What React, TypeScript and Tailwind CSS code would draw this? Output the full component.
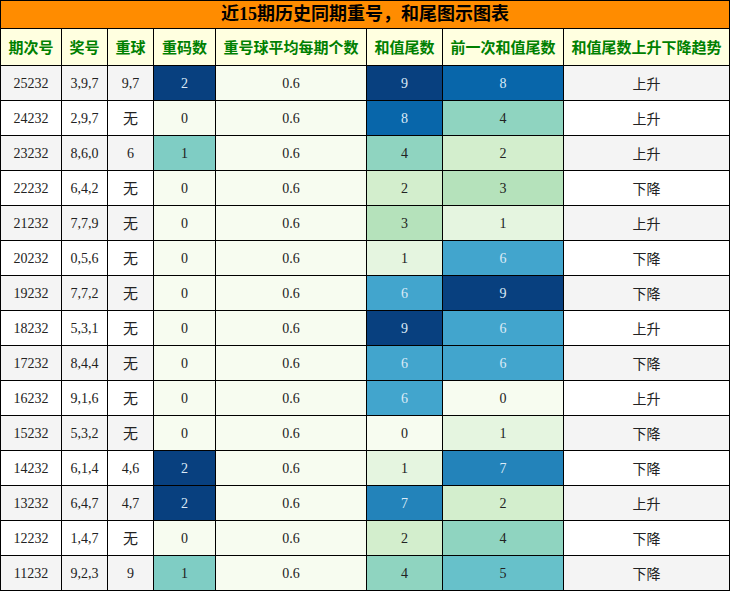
const rows: [string, string, string, number, number, number, string][] = [
  ["25232", "3,9,7", "9,7", 2, 9, 8, "上升"],
  ["24232", "2,9,7", "无", 0, 8, 4, "上升"],
  ["23232", "8,6,0", "6", 1, 4, 2, "上升"],
  ["22232", "6,4,2", "无", 0, 2, 3, "下降"],
  ["21232", "7,7,9", "无", 0, 3, 1, "上升"],
  ["20232", "0,5,6", "无", 0, 1, 6, "下降"],
  ["19232", "7,7,2", "无", 0, 6, 9, "下降"],
  ["18232", "5,3,1", "无", 0, 9, 6, "上升"],
  ["17232", "8,4,4", "无", 0, 6, 6, "下降"],
  ["16232", "9,1,6", "无", 0, 6, 0, "上升"],
  ["15232", "5,3,2", "无", 0, 0, 1, "下降"],
  ["14232", "6,1,4", "4,6", 2, 1, 7, "下降"],
  ["13232", "6,4,7", "4,7", 2, 7, 2, "上升"],
  ["12232", "1,4,7", "无", 0, 2, 4, "下降"],
  ["11232", "9,2,3", "9", 1, 4, 5, "下降"],
]

// GnBu-like scale, value 0..9
const tail = ["#f7fcf0", "#e5f5e0", "#d3eecd", "#b5e2bb", "#8fd4c0", "#67c1ca", "#42a5cd", "#2383ba", "#0866aa", "#08407f"]
const repeat = ["#f7fcf0", "#7fcdc4", "#08407f"]

const headers = ["期次号", "奖号", "重球", "重码数", "重号球平均每期个数", "和值尾数", "前一次和值尾数", "和值尾数上升下降趋势"]

const serif = "font-['Liberation_Serif','Noto_Sans_CJK_SC',serif]"
const cjk = "font-['Noto_Sans_CJK_SC',sans-serif]"

function Cell({ bg, light, children, font }: { bg: string; light?: boolean; children: React.ReactNode; font?: string }) {
  return (
    <div
      className={`flex items-center justify-center text-[14px] ${font ?? serif} ${light ? "text-[#dcebf7]" : "text-[#222]"}`}
      style={{ backgroundColor: bg }}
    >
      {children}
    </div>
  )
}

export default function App() {
  return (
    <div className="w-[730px] bg-white">
      <div className="grid grid-cols-[60px_45px_45px_61px_150px_75px_120px_165px] grid-rows-[27px_36px] auto-rows-[34px] gap-px border border-black bg-black">
        <div className={`col-span-8 flex items-center justify-center bg-[#ff8c00] text-[18px] font-bold text-black ${serif}`}>
          近15期历史同期重号，和尾图示图表
        </div>
        {headers.map((h) => (
          <div key={h} className={`flex items-center justify-center bg-[#ffffe0] text-[15px] font-bold text-[#008000] ${cjk}`}>
            {h}
          </div>
        ))}
        {rows.map((r, i) => {
          const base = i % 2 === 0 ? "#f4f4f4" : "#ffffff"
          return [
            <Cell key={i + "a"} bg={base}>{r[0]}</Cell>,
            <Cell key={i + "b"} bg={base}>{r[1]}</Cell>,
            <Cell key={i + "c"} bg={base} font={r[2] === "无" ? `${cjk} text-[15px]` : undefined}>{r[2]}</Cell>,
            <Cell key={i + "d"} bg={repeat[r[3]]} light={r[3] === 2}>{r[3]}</Cell>,
            <Cell key={i + "e"} bg="#f7fcf0">0.6</Cell>,
            <Cell key={i + "f"} bg={tail[r[4]]} light={r[4] >= 6}>{r[4]}</Cell>,
            <Cell key={i + "g"} bg={tail[r[5]]} light={r[5] >= 6}>{r[5]}</Cell>,
            <Cell key={i + "h"} bg={base} font={cjk}>{r[6]}</Cell>,
          ]
        })}
      </div>
    </div>
  )
}
